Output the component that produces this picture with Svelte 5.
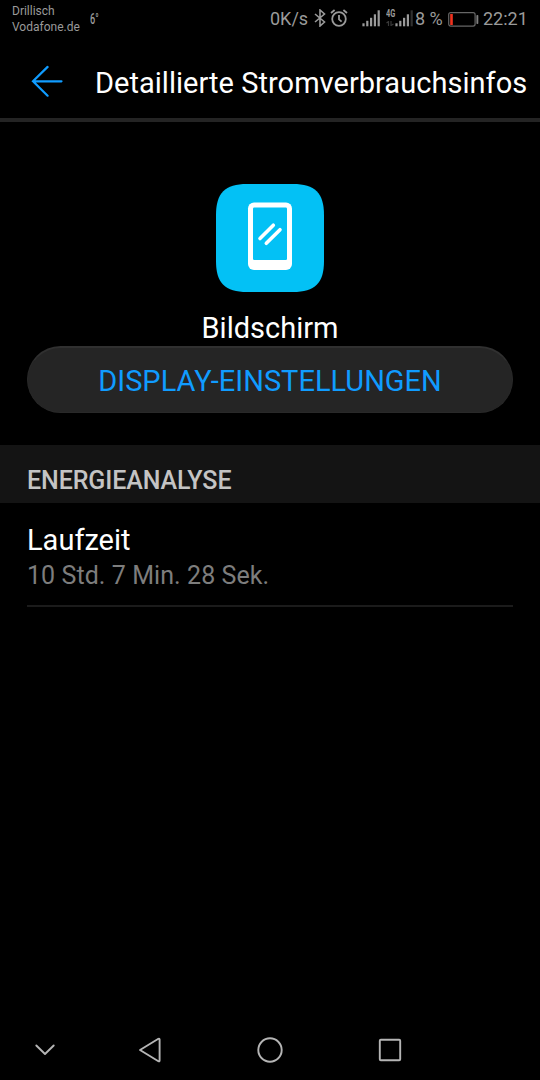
<script>
  let carrier = ["Drillisch", "Vodafone.de"];
  let time = "22:21";
  let batteryLevel = 8;

  let bars = [3, 5.5, 8.5, 12, 16];
  let entries = [{ label: "Laufzeit", value: "10 Std. 7 Min. 28 Sek." }];
</script>

<div class="screen">
  <div class="status">
    <div class="carrier">
      {#each carrier as line}
        <span>{line}</span>
      {/each}
    </div>
    <span class="weather">6°</span>

    <div class="indicators">
      <span class="speed">0K/s</span>
      <svg class="bluetooth" width="12" height="18" viewBox="0 0 12 18">
        <path d="M1 5 L10.5 13 L6 17 V1 L10.5 5 L1 13" />
      </svg>
      <svg class="alarm" width="18" height="18" viewBox="0 0 18 18">
        <circle cx="9" cy="10" r="6.8" />
        <path d="M9 6 V10.3 L11.6 12.6 M1 4 L4.6 1 M17 4 L13.4 1" />
      </svg>
      <svg class="signal" width="18" height="17">
        {#each bars as h, i}
          <rect x={0.4 + i * 3.8} y={16.3 - h} width="2.2" height={h} />
        {/each}
      </svg>
      <div class="network">
        <span>4G</span>
        <svg width="8" height="5" viewBox="0 0 8 5">
          <path d="M0.5 2 L2.5 0.5 V5 M5 0 V4.5 L7.5 3" />
        </svg>
      </div>
      <svg class="signal second" width="18" height="17">
        {#each bars as h, i}
          <rect class:weak={i === 4} x={0.4 + i * 3.8} y={16.3 - h} width="2.2" height={h} />
        {/each}
      </svg>
      <span class="percent">{batteryLevel} %</span>
      <svg class="battery" width="31" height="15" viewBox="0 0 31 15">
        <rect class="shell" x="0.7" y="0.7" width="26.4" height="13.4" rx="2" />
        <rect class="level" x="2.2" y="2" width="2.6" height="11" />
        <rect class="nub" x="28.4" y="3" width="1.9" height="9" rx="0.8" />
      </svg>
      <span class="time">{time}</span>
    </div>
  </div>

  <header>
    <svg class="back" width="32" height="32" viewBox="0 0 32 32">
      <path d="M30.5 16.3 H2 M16.6 1.9 L2 16.3 L16.6 30.7" />
    </svg>
    <h1>Detaillierte Stromverbrauchsinfos</h1>
  </header>

  <main>
    <svg class="app-icon" width="108" height="108" viewBox="0 0 108 108">
      <path
        fill="#03c1f5"
        d="M0 31 C0 9 9 0 31 0 H77 C99 0 108 9 108 31 V77 C108 99 99 108 77 108 H31 C9 108 0 99 0 77 Z"
      />
      <rect x="32" y="18.5" width="44" height="67.5" rx="6" fill="#fff" />
      <rect x="37" y="23.5" width="34" height="52.5" rx="1.2" fill="#03c1f5" />
      <path d="M44 54.5 L57.3 41.2 M50.3 59.3 L64 45.7" stroke="#fff" stroke-width="3.6" stroke-linecap="round" />
    </svg>
    <h2>Bildschirm</h2>
    <button>DISPLAY-EINSTELLUNGEN</button>

    <h3>ENERGIEANALYSE</h3>
    <ul>
      {#each entries as entry}
        <li>
          <span class="label">{entry.label}</span>
          <span class="value">{entry.value}</span>
        </li>
      {/each}
    </ul>
  </main>

  <nav>
    <svg width="90" height="60" viewBox="0 0 90 60">
      <path d="M36.3 25.5 L45 34 L53.7 25.5" />
    </svg>
    <svg width="120" height="60" viewBox="0 0 120 60">
      <path d="M50 30 L68.4 18.8 Q69.6 18.4 69.6 19.6 V40.6 Q69.6 41.8 68.4 41.2 Z" />
    </svg>
    <svg width="120" height="60" viewBox="0 0 120 60">
      <circle cx="60" cy="30" r="11.7" />
    </svg>
    <svg width="120" height="60" viewBox="0 0 120 60">
      <rect x="49.8" y="19.8" width="20.4" height="20.4" rx="1" />
    </svg>
  </nav>
</div>

<style>
  :global(body) {
    margin: 0;
    background: #000;
  }

  .screen {
    display: flex;
    flex-direction: column;
    width: 540px;
    height: 1080px;
    overflow: hidden;
    background: #000;
    color: #fff;
    font-family: Roboto, sans-serif;
  }

  svg {
    display: block;
    flex: none;
    fill: none;
  }

  .status {
    display: flex;
    height: 40px;
    color: #9a9a9a;
    white-space: nowrap;
  }

  .carrier {
    display: flex;
    flex-direction: column;
    width: 78px;
    padding: 3px 0 0 12px;
    font-size: 12px;
    line-height: 16px;
  }

  .weather {
    width: 16px;
    padding-top: 10px;
    font-size: 14px;
    font-weight: 500;
    line-height: 18px;
    transform: scaleX(0.65);
    transform-origin: left;
  }

  .indicators {
    display: flex;
    align-items: flex-start;
    margin-left: auto;
    width: 270px;
    font-size: 18px;
    line-height: 38px;
  }

  .speed {
    width: 44px;
  }

  .bluetooth,
  .alarm {
    margin-top: 9px;
    stroke: #9a9a9a;
    stroke-width: 1.6;
  }

  .alarm {
    margin-left: 4px;
    stroke-width: 1.8;
  }

  .signal {
    margin: 10px 0 0 14px;
    fill: #9a9a9a;
  }

  .weak {
    fill: #303030;
  }

  .network {
    display: flex;
    flex-direction: column;
    width: 9px;
    margin: 9px 0 0 6px;
  }

  .network span {
    font-size: 10px;
    font-weight: 700;
    line-height: 10px;
    transform: scaleX(0.74);
    transform-origin: left;
  }

  .network svg {
    margin-top: 2px;
    stroke: #383838;
    stroke-width: 1.2;
  }

  .second {
    margin-left: 0;
  }

  .percent {
    width: 33px;
    margin-left: 2px;
    font-size: 18px;
  }

  .battery {
    margin-top: 11.5px;
  }

  .shell {
    stroke: #666;
    stroke-width: 1.2;
  }

  .level {
    fill: #f0321e;
  }

  .nub {
    fill: #808080;
  }

  .time {
    margin-left: 4px;
  }

  header {
    display: flex;
    align-items: center;
    height: 82px;
    padding: 4px 0 0 31px;
    box-sizing: border-box;
    border-bottom: 4px solid #242424;
  }

  .back {
    stroke: #109cff;
    stroke-width: 2.2;
    stroke-linecap: round;
  }

  h1 {
    margin: 0 0 0 32px;
    padding-top: 4px;
    font-size: 29px;
    font-weight: 400;
    letter-spacing: 0.03px;
    white-space: nowrap;
  }

  main {
    display: flex;
    flex: 1;
    flex-direction: column;
  }

  .app-icon {
    align-self: center;
    margin-top: 62px;
  }

  h2 {
    height: 54px;
    margin: 0;
    font-size: 29px;
    font-weight: 400;
    line-height: 72px;
    text-align: center;
  }

  button {
    height: 67px;
    margin: 0 27px;
    padding: 2px 0 0;
    border: 1px solid #292929;
    border-top: 2px solid #303030;
    border-radius: 34px;
    background: #252525;
    color: #109cff;
    font: 400 29px Roboto, sans-serif;
  }

  h3 {
    height: 58px;
    margin: 32px 0 0;
    padding: 13px 27px 0;
    box-sizing: border-box;
    background: #141414;
    color: #c4c4c4;
    font-size: 25px;
    font-weight: 500;
    line-height: 46px;
    letter-spacing: -0.1px;
  }

  ul {
    margin: 0;
    padding: 0 27px;
    list-style: none;
  }

  li {
    display: flex;
    flex-direction: column;
    padding: 19px 0 12px;
    border-bottom: 2px solid #1b1b1b;
  }

  .label {
    font-size: 29px;
    line-height: 36px;
  }

  .value {
    color: #7d7d7d;
    font-size: 25px;
    line-height: 35px;
    letter-spacing: 0.07px;
  }

  nav {
    display: flex;
    height: 60px;
  }

  nav svg {
    stroke: #b5b5b5;
    stroke-width: 1.9;
    stroke-linecap: round;
    stroke-linejoin: round;
  }
</style>
